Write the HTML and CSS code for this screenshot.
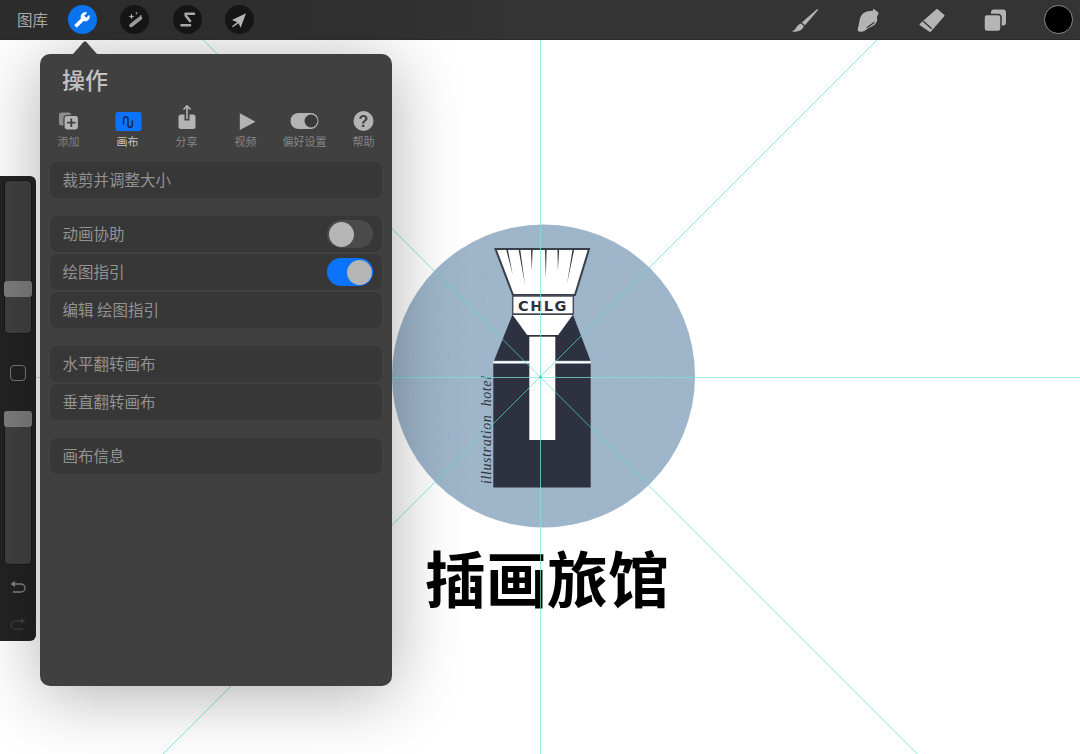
FILE: index.html
```html
<!DOCTYPE html>
<html lang="zh">
<head>
<meta charset="utf-8">
<title>操作</title>
<link rel="stylesheet" href="styles.css">
</head>
<body>
<div class="app">
  <header class="topbar">
    <div class="tools-left">
      <span class="gallery">图库</span>
      <svg class="round active" viewBox="0 0 30 30"><g transform="translate(23.2 6.8) scale(-.72 .72)"><path class="white" d="M22.7 19l-9.1-9.1c.9-2.3.4-5-1.5-6.9-2-2-5-2.4-7.4-1.3L9 6 6 9 1.6 4.7C.4 7.1.9 10.1 2.9 12.1c1.9 1.9 4.6 2.4 6.9 1.5l9.1 9.1c.4.4 1 .4 1.4 0l2.3-2.3c.5-.4.5-1.1.1-1.4z"/></g></svg>
      <svg class="round" viewBox="0 0 29 29"><path class="bar" d="M11 20.500l9.500-7.500"/><path class="spark" d="M11.500 8.500l.7 2.300 2.300.7-2.300.7-.7 2.300-.7-2.300-2.300-.7 2.300-.7zM16.500 6.500l.4 1.200 1.200.4-1.200.4-.4 1.200-.4-1.200-1.200-.4 1.200-.4zM21 9.500l.3 1 1 .3-1 .3-.3 1-.3-1-1-.3 1-.3z"/></svg>
      <svg class="round" viewBox="0 0 29 29"><path class="squiggle" d="M12.500 8.700h8.500M12.700 10.500l4.300 5.500M8.500 20.300h8.500"/></svg>
      <svg class="round" viewBox="0 0 29 29"><path class="tool" d="M21 8.300L7 15l5.200 2.300L7 21.300l.8.9 5.700-4 2.200 4.500z"/></svg>
    </div>
    <div class="tools-right">
      <svg class="tool-icon" viewBox="0 0 28 26"><path class="tool" d="M26 2.300c.6-.4 1.300.2.900.9L14 18.200l-3.200-2.700zM10 16.500l2.800 2.500c-.5 2-2 3.800-4.500 4.800-2.300 1-5 1.100-7.300.7 1.800-.8 3-2 4-3.500 1.200-2.300 2.500-3.800 5-4.500z"/></svg>
      <svg class="tool-icon" viewBox="0 0 28 26"><path class="tool" d="M19 2.300c.5-.3 1-.2 1.500.1l3.300 2.500c.8.600.9 1.400.5 2.100l-1.500 3.200c.5 1.300.6 2.700.1 4-.7 1.900-1.800 3.400-3.400 4.400-2 1.300-4.400 2.100-6.300 3.300-2 1.300-3.700 2.800-6 2.800-1.700 0-3.200-.5-3.500-1.500-.2-.7.3-2.200.7-3.700.6-2.300.8-4.800 1.300-6.900.5-2.600 1.800-5.200 4-6.700 2.300-1.500 5.500-2 9.300-2.100z"/><path class="cut" d="M12.800 20.800l7.700-5.600"/></svg>
      <svg class="tool-icon" viewBox="0 0 28 26"><path class="eraser-body" d="M19 3l6.500 5.500L12 24l-9.500-6.500z"/><path class="cut" d="M5.300 14.200l8.400 7.600"/></svg>
      <svg class="tool-icon" viewBox="0 0 28 26"><rect class="tool" x="10" y="2.500" width="15" height="16" rx="3"/><rect class="tool-cut" x="3" y="7.500" width="17" height="17" rx="3"/></svg>
      <span class="swatch"></span>
    </div>
  </header>

  <main class="stage">
    <svg class="art" viewBox="0 40 1080 714">
      <defs>
        <filter id="paper" x="0" y="0" width="100%" height="100%">
          <feTurbulence type="fractalNoise" baseFrequency=".2 .5" numOctaves="3" seed="4"/>
          <feColorMatrix values="0 0 0 0 .36  0 0 0 0 .47  0 0 0 0 .58  0 0 0 1.600 -.6"/>
          <feComposite in2="SourceGraphic" operator="in"/>
        </filter>
      </defs>
      <circle class="disc" cx="543.500" cy="376" r="151.500"/>
      <circle class="disc" cx="543.500" cy="376" r="151.500" filter="url(#paper)"/>
      <path class="ink" d="M512.700 314L494 360.700h96.500L572.700 314z"/>
      <rect class="ink" x="493.300" y="363.500" width="97.400" height="124"/>
      <path class="brush-white" d="M495.500 249h93.500l-14 46h-62z"/>
      <path class="brush-edge" d="M495.500 249h93.500l-14 46h-62z"/>
      <rect class="collar" x="512.700" y="296" width="60.600" height="18"/>
      <path class="white" d="M512.700 315h60l-14.500 20h-31z"/>
      <rect class="white" x="529.300" y="336.700" width="26" height="103.300"/>
      <rect class="white" x="493.300" y="361.300" width="97.400" height="2"/>
      <g class="hairs">
        <path d="M506.300 250h1.600l4.900 25zM518.700 250h1.600l4.700 35zM531 250h1.600l-.8 21zM545 250h1.600l-.8 29zM557.500 250h1.600l-1.200 21zM572.500 250h1.600l-7.100 34z"/>
      </g>
      <text class="chlg" x="543" y="310.500">CHLG</text>
      <text class="script" transform="translate(490.500 484) rotate(-90)">illustration  hotel</text>
      <text class="headline" x="547" y="603">插画旅馆</text>
      <g class="guides">
        <path d="M540.500 40v714M0 377.500h1080"/>
        <path class="diag" d="M203.300 40L917.300 754"/>
        <path class="diag" d="M877 40L163 754"/>
      </g>
      <circle class="guide-dot" cx="540.500" cy="377" r="1.500"/>
    </svg>

    <aside class="rail">
      <div class="slider size"><span class="thumb"></span></div>
      <div class="rail-gap"><span class="modify"></span></div>
      <div class="slider opacity"><span class="thumb"></span></div>
      <svg class="rail-icon undo" viewBox="0 0 18 16"><path class="stroke" d="M5 5h7a3.500 3.500 0 0 1 0 8H4"/><path class="rail-arrow" d="M1.500 5l4.500-3v6z"/></svg>
      <svg class="rail-icon redo" viewBox="0 0 18 16"><path class="stroke-dim" d="M13 5H6a3.500 3.500 0 0 0 0 8h8"/><path class="dim" d="M16.500 5l-4.500-3v6z"/></svg>
    </aside>

    <section class="panel">
      <span class="pointer"></span>
      <h1 class="title">操作</h1>
      <nav class="tabs">
        <div class="tab">
          <svg class="tab-icon" viewBox="0 0 30 28"><rect class="tab-back" x="4.500" y="6" width="13" height="14" rx="3"/><rect class="tab-front" x="10" y="9.500" width="14.500" height="14.500" rx="3"/><path class="plus" d="M17.300 12.500v8.500M13 16.700h8.600"/></svg>
          <span>添加</span>
        </div>
        <div class="tab on">
          <svg class="tab-icon" viewBox="0 0 30 28"><rect class="blue" x="2.500" y="6" width="26" height="19" rx="2.500"/><path class="wave" d="M10.500 18v-5a2.200 2.200 0 0 1 4.400 0v6a2.200 2.200 0 0 0 4.400 0v-4"/></svg>
          <span>画布</span>
        </div>
        <div class="tab">
          <svg class="tab-icon" viewBox="0 0 30 28"><path class="tool" d="M9 8.500h3.500v6h5v-6H21a2.500 2.500 0 0 1 2.500 2.500v9.500A2.500 2.500 0 0 1 21 23H9a2.500 2.500 0 0 1-2.500-2.500V11A2.500 2.500 0 0 1 9 8.500z"/><path class="arrow" d="M15 13V0M11.500 3.500L15 0l3.500 3.500"/></svg>
          <span>分享</span>
        </div>
        <div class="tab">
          <svg class="tab-icon" viewBox="0 0 30 28"><path class="tool" d="M8.800 7.300L24.500 15.700 8.800 24z"/></svg>
          <span>视频</span>
        </div>
        <div class="tab">
          <svg class="tab-icon" viewBox="0 0 30 28"><rect class="tool" x=".5" y="7" width="28" height="16" rx="8"/><circle class="knob-dark" cx="21" cy="15" r="6.500"/></svg>
          <span>偏好设置</span>
        </div>
        <div class="tab">
          <svg class="tab-icon" viewBox="0 0 30 28"><circle class="tool" cx="14.500" cy="15" r="10"/><text class="help" x="14.500" y="20.500">?</text></svg>
          <span>帮助</span>
        </div>
      </nav>

      <div class="group"><div class="row">裁剪并调整大小</div></div>
      <div class="group">
        <div class="row">动画协助<span class="switch"></span></div>
        <div class="row">绘图指引<span class="switch is-on"></span></div>
        <div class="row">编辑 绘图指引</div>
      </div>
      <div class="group">
        <div class="row">水平翻转画布</div>
        <div class="row">垂直翻转画布</div>
      </div>
      <div class="group"><div class="row">画布信息</div></div>
    </section>
  </main>
</div>
</body>
</html>
```

FILE: styles.css
```css
* { box-sizing: border-box; }
html, body { margin: 0; height: 100%; }
body {
  font-family: "Noto Sans CJK SC", "Liberation Sans", sans-serif;
  background: #fff;
  overflow: hidden;
}
.app { display: flex; flex-direction: column; width: 1080px; height: 754px; }

/* top bar */
.topbar {
  position: relative;
  z-index: 3;
  flex: 0 0 40px;
  display: flex;
  justify-content: space-between;
  align-items: center;
  background: linear-gradient(90deg, #2c2c2c 0, #2f2f2f 380px, #343434 520px, #343434 100%);
  border-bottom: 1px solid #2a2a2a;
}
.tools-left { display: flex; align-items: center; padding-left: 17px; }
.gallery { font-size: 15.500px; line-height: 20px; color: #a9a9a9; width: 50.700px; padding-bottom: 1px; }
.round {
  width: 29px; height: 29px;
  border-radius: 50%;
  background: #151515;
  margin-right: 23.500px;
  flex: none;
}
.round.active { background: #0a74ee; }
.tools-right { display: flex; align-items: center; padding-right: 7.500px; }
.tool-icon { width: 28px; height: 26px; flex: none; margin-right: 35.500px; }
.tool-icon:nth-of-type(4) { margin-right: 35px; }
.swatch {
  width: 28.500px; height: 28.500px;
  border-radius: 50%;
  background: #000;
  border: 1.500px solid #8a8a8a;
}

/* svg paints */
.white { fill: #fff; }
.tool { fill: #b4b4b4; }
.tool-cut { fill: #b4b4b4; stroke: #343434; stroke-width: 1.500; }
.cut { fill: none; stroke: #343434; stroke-width: 1.300; }
.eraser-body { fill: #b4b4b4; stroke: #b4b4b4; stroke-width: 2; stroke-linejoin: round; }
.bar { fill: none; stroke: #9a9a9a; stroke-width: 3.600; stroke-linecap: round; }
.spark { fill: #b4b4b4; }
.squiggle { fill: none; stroke: #a8a8a8; stroke-width: 2.600; stroke-linecap: round; stroke-linejoin: round; }
.stroke { fill: none; stroke: #858585; stroke-width: 1.300; }
.rail-arrow { fill: #858585; }
.stroke-dim { fill: none; stroke: #3f3f3f; stroke-width: 1.300; }
.dim { fill: #3f3f3f; }
.tab-back { fill: #8e8e8e; stroke: #404040; stroke-width: 1; }
.tab-front { fill: #b4b4b4; stroke: #404040; stroke-width: 1.200; }
.plus { fill: none; stroke: #404040; stroke-width: 1.800; }
.blue { fill: #0a74ff; }
.wave { fill: none; stroke: #18263c; stroke-width: 1.500; stroke-linecap: round; }
.arrow { fill: none; stroke: #b4b4b4; stroke-width: 1.600; }
.knob-dark { fill: #3a3a3a; }
.help {
  fill: #404040;
  font: 700 16px "Liberation Sans", sans-serif;
  text-anchor: middle;
}
.tab-icon { overflow: visible; }

/* canvas */
.stage { position: relative; flex: 1; background: #fff; overflow: hidden; }
.art { position: absolute; inset: 0; width: 1080px; height: 714px; display: block; }
.disc { fill: #9db5ca; }
.ink { fill: #2d3140; }
.brush-white { fill: #fff; }
.brush-edge { fill: none; stroke: #3a3f4c; stroke-width: 2; }
.collar { fill: #fff; stroke: #4a4e5a; stroke-width: 1.500; }
.hairs path { fill: #30343f; }
.chlg {
  fill: #2d3140;
  font: 700 14.500px "DejaVu Sans", sans-serif;
  letter-spacing: 1.500px;
  text-anchor: middle;
}
.script {
  fill: #2d3140;
  font: italic 14px "Liberation Serif", serif;
  letter-spacing: .6px;
  white-space: pre;
}
.headline {
  fill: #000;
  font: 700 61px "Noto Sans CJK SC", sans-serif;
  text-anchor: middle;
}
.guides path { fill: none; stroke: #75e6db; stroke-opacity: .75; stroke-width: 1; }
.guides .diag { stroke: #55dccf; stroke-opacity: .7; stroke-width: 1; }
.guide-dot { fill: #3fd6c6; }

/* left rail */
.rail {
  position: absolute;
  left: 0; top: 136px;
  width: 36px; height: 465px;
  padding: 4px 4px 0;
  background: #232323;
  border-radius: 0 6px 6px 0;
  display: flex;
  flex-direction: column;
  align-items: center;
}
.slider {
  position: relative;
  flex: 0 0 154px;
  width: 28px;
  background: #414141;
  border: 1px solid #191919;
  border-radius: 5px;
}
.thumb {
  position: absolute;
  left: -1px; right: -1px;
  height: 16px;
  background: #7e7e7e;
  border-radius: 3px;
}
.size .thumb { top: 100px; }
.opacity .thumb { top: -1px; }
.rail-gap { flex: 0 0 77px; display: flex; align-items: center; justify-content: center; }
.modify { width: 16px; height: 16px; border: 1px solid #7a7a7a; border-radius: 4px; }
.rail-icon { width: 18px; height: 16px; flex: none; }
.undo { margin-top: 14px; }
.redo { margin-top: 21px; }

/* popover */
.panel {
  position: absolute;
  left: 40px; top: 14px;
  width: 352px; height: 632px;
  padding-top: 10px;
  background: #404040;
  border-radius: 10px;
  box-shadow: 0 8px 70px rgba(0, 0, 0, .32);
}
.pointer {
  position: absolute;
  left: 33px; top: -13px;
  width: 24px; height: 13px;
  background: #404040;
  clip-path: polygon(0 100%, 46% 4%, 54% 4%, 100% 100%);
}
.title {
  margin: 0;
  padding-left: 22px;
  font-size: 23px;
  line-height: 30px;
  font-weight: 500;
  color: #c2c2c2;
}
.tabs {
  margin-top: 12px;
  display: grid;
  grid-template-columns: repeat(6, 59px);
  justify-content: center;
}
.tab {
  display: flex;
  flex-direction: column;
  align-items: center;
  font-size: 11px;
  line-height: 14px;
  color: #858585;
}
.tab.on { color: #c4c4c4; }
.tab-icon { width: 30px; height: 28px; display: block; }
.group {
  margin: 18px 10px 0;
  display: flex;
  flex-direction: column;
  gap: 2px;
}
.tabs + .group { margin-top: 14px; }
.row {
  height: 36px;
  padding: 0 9px 3px 12.500px;
  display: flex;
  align-items: center;
  justify-content: space-between;
  background: #373737;
  border-radius: 8px;
  font-size: 15.500px;
  color: #929292;
}
.switch {
  position: relative;
  width: 46px; height: 28px;
  margin-bottom: -3px;
  border-radius: 14px;
  background: #4a4a4a;
}
.switch::after {
  content: "";
  position: absolute;
  left: 1.500px; top: 1.500px;
  width: 25px; height: 25px;
  border-radius: 50%;
  background: #b6b6b6;
}
.switch.is-on { background: #0a74ff; }
.switch.is-on::after { left: 19.500px; }
```
